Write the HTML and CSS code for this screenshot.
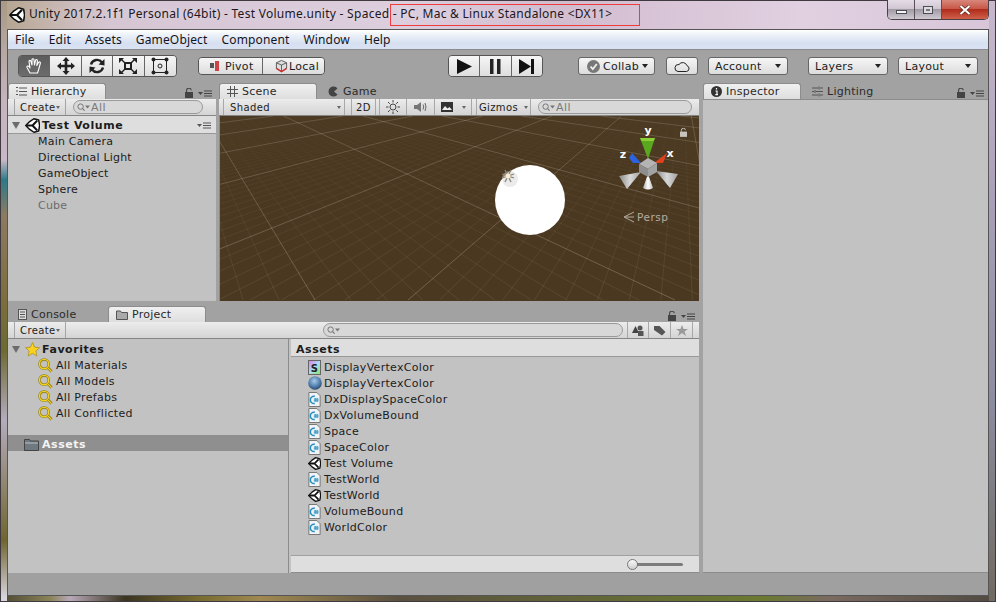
FILE: index.html
```html
<!DOCTYPE html>
<html lang="en">
<head>
    <meta charset="UTF-8">
    <meta name="viewport" content="width=device-width, initial-scale=1.0">
    <title>Unity Editor</title>
    <link rel="stylesheet" href="styles.css">
</head>
<body>

<svg class="defs" width="0" height="0">
    <symbol id="i-unity" viewBox="0 0 16 16">
        <path d="M9.500 .8 14.600 2.200 15.600 8 14.600 13.800 9.500 15.200 5 12.200 .8 8 5 3.800Z" fill="#fff" stroke="#111" stroke-width="1.600" stroke-linejoin="round"/>
        <path d="M1.500 8H8M8 8 13 2.800M8 8 13 13.200" stroke="#111" stroke-width="2.200" fill="none"/>
    </symbol>
    <symbol id="i-cs" viewBox="0 0 13 16">
        <path d="M.5 .5H9L12.500 4V15.500H.5Z" fill="#f0f3f5" stroke="#707070"/>
        <path d="M6.800 4.600A3.900 3.900 0 1 0 6.800 12.200" fill="none" stroke="#1c8ec4" stroke-width="1.600"/>
        <path d="M7.200 6.300V10.700M9.300 6.300V10.700M5.800 7.600H10.800M5.800 9.400H10.800" stroke="#1c8ec4" stroke-width=".9"/>
    </symbol>
    <symbol id="i-glass" viewBox="0 0 16 16">
        <circle cx="6.500" cy="6.500" r="5" fill="none" stroke="#8a7510" stroke-width="2.600"/>
        <circle cx="6.500" cy="6.500" r="5" fill="none" stroke="#f2d21e" stroke-width="1.500"/>
        <path d="M10.500 10.500 14.500 14.500" stroke="#8a7510" stroke-width="3"/>
        <path d="M10.500 10.500 14.500 14.500" stroke="#f2d21e" stroke-width="1.400"/>
    </symbol>
    <symbol id="i-lock" viewBox="0 0 8 10">
        <rect x="0" y="4" width="8" height="6" fill="currentColor"/>
        <path d="M1.600 4V2.600A2.300 2.300 0 0 1 6.200 2.200" fill="none" stroke="currentColor" stroke-width="1.100"/>
    </symbol>
    <symbol id="i-menu" viewBox="0 0 14 7">
        <path d="M0 2H5L2.500 5Z" fill="currentColor"/>
        <path d="M6 1H14M6 3.500H14M6 6H14" stroke="currentColor" stroke-width="1"/>
    </symbol>
    <symbol id="i-glass-small" viewBox="0 0 14 8">
        <circle cx="3.600" cy="3.600" r="2.700" fill="none" stroke="#777"/>
        <path d="M5.600 5.600 7.600 7.600" stroke="#777" stroke-width="1.200"/>
        <path d="M8 2.500H13L10.500 5.500Z" fill="#777"/>
    </symbol>
</svg>

<div class="window">
    <div class="titlebar">
        <svg class="title-logo" width="16" height="16"><use href="#i-unity"/></svg>
        <span class="title-text">Unity 2017.2.1f1 Personal (64bit) - Test Volume.unity - Spaced - PC, Mac &amp; Linux Standalone &lt;DX11&gt;</span>
        <div class="title-mark"></div>
        <div class="winctl">
            <div class="winbtn min"><span></span></div>
            <div class="winbtn max"><span></span></div>
            <div class="winbtn close">
                <svg width="12" height="10" viewBox="0 0 12 10"><path d="M1.500 1 10.500 9M10.500 1 1.500 9" stroke="#5a2a20" stroke-width="3.400"/><path d="M1.500 1 10.500 9M10.500 1 1.500 9" stroke="#fff" stroke-width="2"/></svg>
            </div>
        </div>
    </div>

    <div class="client">
        <div class="menubar">
            <span>File</span><span>Edit</span><span>Assets</span><span>GameObject</span><span>Component</span><span>Window</span><span>Help</span>
        </div>

        <div class="toolbar">
            <div class="btn-group tools">
                <div class="tool on">
                    <svg width="18" height="18" viewBox="0 0 18 18"><path d="M5 16 2 10.500C1.500 9 3 8.500 4 9.500L5 11 4 4.500C4 3 5.800 3 6 4.500L7 8 7 2.800C7 1.300 9 1.300 9 2.800L9.500 8 10.500 3.500C10.800 2 12.600 2.400 12.400 4L11.800 8.500 13.500 5.500C14.300 4.300 15.800 5 15.300 6.500L13.500 13 12.500 16Z" fill="#666" stroke="#fff" stroke-width="1.100" stroke-linejoin="round"/></svg>
                </div>
                <div class="tool">
                    <svg width="18" height="18" viewBox="0 0 18 18"><path d="M9 0 12.500 4H10.300V7.700H14V5.500L18 9 14 12.500V10.300H10.300V14H12.500L9 18 5.500 14H7.700V10.300H4V12.500L0 9 4 5.500V7.700H7.700V4H5.500Z" fill="#222"/></svg>
                </div>
                <div class="tool">
                    <svg width="18" height="18" viewBox="0 0 18 18"><path d="M3 7.500A6.200 6.200 0 0 1 14 5.500M15 10.500A6.200 6.200 0 0 1 4 12.500" fill="none" stroke="#222" stroke-width="2.400"/><path d="M16.500 2 16.500 8.500 10.500 7.500ZM1.500 16 1.500 9.500 7.500 10.500Z" fill="#222"/></svg>
                </div>
                <div class="tool">
                    <svg width="20" height="18" viewBox="0 0 20 18"><rect x="7" y="6" width="6" height="6" fill="none" stroke="#222" stroke-width="2"/><path d="M1 1H6L4.500 2.500 7 5 6 6 3.500 3.500 1 6ZM19 1H14L15.500 2.500 13 5 14 6 16.500 3.500 19 6ZM1 17H6L4.500 15.500 7 13 6 12 3.500 14.500 1 12ZM19 17H14L15.500 15.500 13 13 14 12 16.500 14.500 19 12Z" fill="#222"/></svg>
                </div>
                <div class="tool">
                    <svg width="18" height="18" viewBox="0 0 18 18"><rect x="2.500" y="2.500" width="13" height="13" fill="none" stroke="#222"/><circle cx="2.500" cy="2.500" r="2" fill="#222"/><circle cx="15.500" cy="2.500" r="2" fill="#222"/><circle cx="2.500" cy="15.500" r="2" fill="#222"/><circle cx="15.500" cy="15.500" r="2" fill="#222"/><circle cx="9" cy="9" r="2" fill="none" stroke="#222"/></svg>
                </div>
            </div>

            <div class="btn-group pivot">
                <div class="pill">
                    <svg width="11" height="10" viewBox="0 0 11 10"><rect x="0" y="2" width="4" height="5" fill="#555"/><rect x="5" y="0" width="4" height="10" fill="#c44"/></svg>
                    Pivot
                </div>
                <div class="pill local">
                    <svg width="13" height="14" viewBox="0 0 14 14"><path d="M7 1 12.500 3.500V9.500L7 13 1.500 9.500V3.500Z" fill="#ddd" stroke="#555"/><path d="M1.500 3.500 7 6 12.500 3.500M7 6V13" fill="none" stroke="#555"/><path d="M1.500 9.500 7 13 12.500 9.500" fill="none" stroke="#c33" stroke-width="1.500"/></svg>
                    Local
                </div>
            </div>

            <div class="btn-group play">
                <div class="tool">
                    <svg width="15" height="15" viewBox="0 0 15 15"><path d="M0 0 15 7.500 0 15Z" fill="#111"/></svg>
                </div>
                <div class="tool">
                    <svg width="11" height="15" viewBox="0 0 11 15"><rect width="3.500" height="15" fill="#222"/><rect x="7" width="3.500" height="15" fill="#222"/></svg>
                </div>
                <div class="tool">
                    <svg width="15" height="15" viewBox="0 0 15 15"><path d="M0 0 12 7.500 0 15Z" fill="#111"/><rect x="12" width="3" height="15" fill="#111"/></svg>
                </div>
            </div>

            <div class="drop collab">
                <svg width="13" height="13" viewBox="0 0 13 13"><circle cx="6.500" cy="6.500" r="6.500" fill="#777"/><path d="M3.500 6.500 5.800 9 9.800 4" fill="none" stroke="#eee" stroke-width="1.800"/></svg>
                <span>Collab</span><i class="caret"></i>
            </div>
            <div class="drop cloud">
                <svg width="16" height="11" viewBox="0 0 16 11"><path d="M4 10.500H12.500A3 3 0 0 0 13 4.700 4.500 4.500 0 0 0 5 3.500 3.500 3.500 0 0 0 4 10.500Z" fill="none" stroke="#222"/></svg>
            </div>
            <div class="drop account"><span>Account</span><i class="caret"></i></div>
            <div class="drop layers"><span>Layers</span><i class="caret"></i></div>
            <div class="drop layout"><span>Layout</span><i class="caret"></i></div>
        </div>

        <div class="workspace">
            <div class="left-col">
                <div class="top-row">
                    <section class="panel">
                        <div class="tabs">
                            <div class="tab on">
                                <svg width="11" height="9" viewBox="0 0 11 9"><path d="M3 1H11M3 4.500H11M3 8H11" stroke="#555"/><path d="M0 .5H2M0 4H2M0 7.500H2" stroke="#555"/></svg>
                                Hierarchy
                            </div>
                            <div class="tab-tools">
                                <svg class="lock" width="8" height="10"><use href="#i-lock"/></svg>
                                <svg class="menu" width="14" height="7"><use href="#i-menu"/></svg>
                            </div>
                        </div>
                        <div class="ptools">
                            <div class="create">Create<i class="caret small"></i></div>
                            <div class="search hier-search">
                                <svg width="14" height="8"><use href="#i-glass-small"/></svg>All
                            </div>
                        </div>
                        <div class="pbody">
                            <div class="scene-row">
                                <i class="fold"></i>
                                <svg width="15" height="15"><use href="#i-unity"/></svg>
                                <b>Test Volume</b>
                                <svg class="row-menu" width="14" height="7"><use href="#i-menu"/></svg>
                            </div>
                            <ul class="hier-list">
                                <li>Main Camera</li>
                                <li>Directional Light</li>
                                <li>GameObject</li>
                                <li>Sphere</li>
                                <li class="off">Cube</li>
                            </ul>
                        </div>
                    </section>

                    <section class="panel">
                        <div class="tabs">
                            <div class="tab on">
                                <svg width="11" height="11" viewBox="0 0 11 11"><path d="M3.500 0V11M7.500 0V11M0 3.500H11M0 7.500H11" stroke="#555"/></svg>
                                Scene
                            </div>
                            <div class="tab">
                                <svg width="11" height="11" viewBox="0 0 11 11"><path d="M9.500 2.500A5 5 0 1 0 9.500 8.500L6 5.500Z" fill="#444"/></svg>
                                Game
                            </div>
                        </div>
                        <div class="ptools scene-tools">
                            <div class="seg shaded">Shaded<i class="caret small"></i></div>
                            <div class="seg two-d">2D</div>
                            <div class="seg icon-seg">
                                <svg width="14" height="14" viewBox="0 0 14 14"><circle cx="7" cy="7" r="3" fill="none" stroke="#444"/><path d="M7 0V2.500M7 11.500V14M0 7H2.500M11.500 7H14M2 2 3.800 3.800M10.200 10.200 12 12M12 2 10.200 3.800M3.800 10.200 2 12" stroke="#444"/></svg>
                            </div>
                            <div class="seg icon-seg">
                                <svg width="14" height="12" viewBox="0 0 14 12"><path d="M0 4H3L7 1V11L3 8H0Z" fill="#777"/><path d="M9 3.500Q10.500 6 9 8.500M11 2Q13 6 11 10" fill="none" stroke="#666"/></svg>
                            </div>
                            <div class="seg image-seg">
                                <svg width="12" height="10" viewBox="0 0 12 10"><rect width="12" height="10" fill="#333"/><path d="M1 8 4 4 6.500 6.500 8.500 5 11 8Z" fill="#eee"/></svg>
                                <i class="caret small"></i>
                            </div>
                            <div class="seg gizmos">Gizmos<i class="caret small"></i></div>
                            <div class="search scene-search">
                                <svg width="14" height="8"><use href="#i-glass-small"/></svg>All
                            </div>
                        </div>
                        <div class="scene-view">
                            <svg class="scene-svg" width="479" height="184" viewBox="220 116 479 184">
                                <defs>
                                    <linearGradient id="minor-fade" gradientUnits="userSpaceOnUse" x1="0" y1="116" x2="0" y2="300">
                                        <stop offset="0" stop-color="#fff" stop-opacity=".01"/>
                                        <stop offset="1" stop-color="#fff" stop-opacity=".08"/>
                                    </linearGradient>
                                    <linearGradient id="major-fade" gradientUnits="userSpaceOnUse" x1="0" y1="116" x2="0" y2="300">
                                        <stop offset="0" stop-color="#fff" stop-opacity=".15"/>
                                        <stop offset="1" stop-color="#fff" stop-opacity=".22"/>
                                    </linearGradient>
                                    <linearGradient id="cone-l" x1="0" y1="0" x2="1" y2="0">
                                        <stop offset="0" stop-color="#8a8a8a"/>
                                        <stop offset=".5" stop-color="#d8d8d8"/>
                                        <stop offset="1" stop-color="#a0a0a0"/>
                                    </linearGradient>
                                    <linearGradient id="cone-w" x1="0" y1="0" x2="1" y2="0">
                                        <stop offset="0" stop-color="#aaa"/>
                                        <stop offset=".5" stop-color="#fff"/>
                                        <stop offset="1" stop-color="#bbb"/>
                                    </linearGradient>
                                </defs>
                                <g id="grid" fill="none"></g>
                                <circle cx="530" cy="200" r="35" fill="#fff"/>
                                <g transform="translate(508 176)">
                                    <circle cx="2" cy="3" r="8" fill="#d8d8d8" opacity=".5"/>
                                    <path d="M-6 -2 6 2M-3 -6 3 6M3 -6 -3 6M-6 2 6 -2" stroke="#8c8678" stroke-width="1.300"/>
                                    <circle r="2.500" fill="#fdeccf"/>
                                </g>
                                <path d="M640 138H655L648 159Z" fill="#5aa81e"/>
                                <path d="M640 138H655L653.500 141H641.500Z" fill="#8ad034"/>
                                <path d="M667 153 663 163 654 163Z" fill="#e0401c"/>
                                <path d="M629 158 632 153 641 163 633 163Z" fill="#2a62e0"/>
                                <path d="M619 176 627 189 641 172Z" fill="url(#cone-l)"/>
                                <path d="M678 174 670 188 656 171Z" fill="url(#cone-l)"/>
                                <path d="M643 188Q648 191 653 188L648 174Z" fill="url(#cone-w)"/>
                                <path d="M639 164 648 158 657 163 648 169Z" fill="#b4b4b4"/>
                                <path d="M639 164 648 169V177L639 172Z" fill="#8e8e8e"/>
                                <path d="M657 163 648 169V177L657 172Z" fill="#a2a2a2"/>
                                <text class="axis" x="648" y="134" text-anchor="middle">y</text>
                                <text class="axis" x="670" y="157" text-anchor="middle">x</text>
                                <text class="axis" x="623" y="158" text-anchor="middle">z</text>
                                <path d="M634 212 624 217 634 222M634 217H625" fill="none" stroke="#b5ada0"/>
                                <text class="persp" x="637" y="221">Persp</text>
                                <g transform="translate(680 128)" color="#c8c4bc"><use href="#i-lock" width="7" height="9"/></g>
                            </svg>
                        </div>
                    </section>
                </div>

                <section class="panel bottom-panel">
                    <div class="tabs">
                        <div class="tab console">
                            <svg width="9" height="11" viewBox="0 0 9 11"><rect x=".5" y=".5" width="8" height="10" fill="#ddd" stroke="#555"/><path d="M2 3H7M2 5.500H7M2 8H7" stroke="#555"/></svg>
                            Console
                        </div>
                        <div class="tab on">
                            <svg width="12" height="10" viewBox="0 0 12 10"><path d="M.5 9.500V1H4.500L5.500 2.500H11.500V9.500Z" fill="#aaa" stroke="#555"/></svg>
                            Project
                        </div>
                        <div class="tab-tools">
                            <svg class="lock" width="8" height="10"><use href="#i-lock"/></svg>
                            <svg class="menu" width="14" height="7"><use href="#i-menu"/></svg>
                        </div>
                    </div>
                    <div class="ptools project-tools">
                        <div class="create">Create<i class="caret small"></i></div>
                        <div class="search project-search">
                            <svg width="14" height="8"><use href="#i-glass-small"/></svg>
                        </div>
                        <div class="seg filter">
                            <svg width="12" height="11" viewBox="0 0 12 11"><path d="M0 8 3.500 1 7 8Z" fill="#444"/><circle cx="8" cy="3" r="2.500" fill="#555"/><rect x="6" y="6" width="5.500" height="5" fill="#555"/></svg>
                        </div>
                        <div class="seg filter">
                            <svg width="12" height="11" viewBox="0 0 12 11"><path d="M0 1H5.500L11.500 7 8 10.500 0 5Z" fill="#555"/></svg>
                        </div>
                        <div class="seg filter filter-end">
                            <svg width="12" height="11" viewBox="0 0 12 11"><path d="M6 0 7.500 4H12L8.500 6.500 10 11 6 8 2 11 3.500 6.500 0 4H4.500Z" fill="#999"/></svg>
                        </div>
                    </div>
                    <div class="project-body">
                        <div class="tree">
                            <div class="fav-row">
                                <i class="fold"></i>
                                <svg width="15" height="15" viewBox="0 0 15 15"><path d="M7.500 .5 9.600 5.200 14.500 5.700 10.800 9 11.900 14 7.500 11.400 3.100 14 4.200 9 .5 5.700 5.400 5.200Z" fill="#fad21e" stroke="#a88a18" stroke-width=".7"/></svg>
                                <b>Favorites</b>
                            </div>
                            <ul class="fav-list">
                                <li><svg width="15" height="15"><use href="#i-glass"/></svg>All Materials</li>
                                <li><svg width="15" height="15"><use href="#i-glass"/></svg>All Models</li>
                                <li><svg width="15" height="15"><use href="#i-glass"/></svg>All Prefabs</li>
                                <li><svg width="15" height="15"><use href="#i-glass"/></svg>All Conflicted</li>
                            </ul>
                            <div class="asset-root">
                                <svg width="15" height="13" viewBox="0 0 15 13"><path d="M.5 12.500V1.500H5.500L6.500 3H14.500V12.500Z" fill="#6f7a80" stroke="#444"/><path d="M1 5H14" stroke="#b8c0c4"/></svg>
                                <b>Assets</b>
                            </div>
                        </div>
                        <div class="files">
                            <div class="files-head">Assets</div>
                            <ul class="file-list">
                                <li>
                                    <svg width="13" height="15" viewBox="0 0 13 15">
                                        <defs><linearGradient id="shader-bg" x1="0" y1="0" x2="1" y2="1"><stop offset="0" stop-color="#e878e8"/><stop offset=".5" stop-color="#a8dcf4"/><stop offset="1" stop-color="#8ce858"/></linearGradient></defs>
                                        <rect x=".5" y=".5" width="12" height="14" fill="url(#shader-bg)" stroke="#666"/>
                                        <text class="shader-s" x="6.500" y="11.500" text-anchor="middle">S</text>
                                    </svg>DisplayVertexColor
                                </li>
                                <li>
                                    <svg width="14" height="14" viewBox="0 0 14 14">
                                        <defs><radialGradient id="ball" cx=".45" cy=".35" r=".7"><stop offset="0" stop-color="#a8cae8"/><stop offset=".6" stop-color="#4f7cac"/><stop offset="1" stop-color="#23405f"/></radialGradient></defs>
                                        <circle cx="7" cy="7" r="6.800" fill="url(#ball)"/>
                                    </svg><span class="after-ball">DisplayVertexColor</span>
                                </li>
                                <li><svg width="13" height="15"><use href="#i-cs"/></svg>DxDisplaySpaceColor</li>
                                <li><svg width="13" height="15"><use href="#i-cs"/></svg>DxVolumeBound</li>
                                <li><svg width="13" height="15"><use href="#i-cs"/></svg>Space</li>
                                <li><svg width="13" height="15"><use href="#i-cs"/></svg>SpaceColor</li>
                                <li><svg width="13" height="13"><use href="#i-unity"/></svg>Test Volume</li>
                                <li><svg width="13" height="15"><use href="#i-cs"/></svg>TestWorld</li>
                                <li><svg width="13" height="13"><use href="#i-unity"/></svg>TestWorld</li>
                                <li><svg width="13" height="15"><use href="#i-cs"/></svg>VolumeBound</li>
                                <li><svg width="13" height="15"><use href="#i-cs"/></svg>WorldColor</li>
                            </ul>
                            <div class="files-foot">
                                <div class="slider"><i></i></div>
                            </div>
                        </div>
                    </div>
                </section>
            </div>

            <section class="panel inspector">
                <div class="tabs">
                    <div class="tab on">
                        <svg width="11" height="11" viewBox="0 0 11 11"><circle cx="5.500" cy="5.500" r="5.500" fill="#333"/><path d="M5.500 2V3.500M4.500 5H6V8.500M4.300 8.700H7" stroke="#fff" stroke-width="1.200" fill="none"/></svg>
                        Inspector
                    </div>
                    <div class="tab">
                        <svg width="11" height="11" viewBox="0 0 11 11"><path d="M0 2H6M8 2H11M0 5.500H2M4 5.500H11M0 9H6M8 9H11M7 .5V3.500M3 4V7M7 7.500V10.500" stroke="#555"/></svg>
                        Lighting
                    </div>
                    <div class="tab-tools">
                        <svg class="lock" width="8" height="10"><use href="#i-lock"/></svg>
                        <svg class="menu" width="14" height="7"><use href="#i-menu"/></svg>
                    </div>
                </div>
                <div class="inspector-body"></div>
            </section>
        </div>

        <div class="statusbar"></div>
    </div>
</div>

<script src="grid.js"></script>
</body>
</html>
```

FILE: styles.css
```css
* {
    box-sizing: border-box;
}

body {
    margin: 0;
    font-family: "DejaVu Sans", sans-serif;
    font-size: 11px;
    color: #1c1c1c;
    overflow: hidden;
}

ul {
    list-style: none;
    margin: 0;
    padding: 0;
}

b {
    letter-spacing: .55px;
}

.defs {
    position: absolute;
}

svg {
    flex: none;
}

/* window frame */
.window {
    width: 996px;
    height: 602px;
    padding: 0 7px 6px;
    display: flex;
    flex-direction: column;
    box-shadow: inset 0 0 0 1px #3e3a40;
    background:
        linear-gradient(180deg, #a89a84 0, #c4b4bc 100px, #c8b8c8 160px, #2c7a88 180px, #8c7a62 215px, #7c6e3c 300px, #6c6a32 350px, #b4acbc 420px, #6f6530 540px, #d8d4dc 598px) left / 7px 100% no-repeat,
        linear-gradient(180deg, #c9b8cc 0, #a8a0b8 200px, #8c8ca0 400px, #706a60 600px) right / 7px 100% no-repeat,
        linear-gradient(90deg, #4a4630 0, #8a8258 50px, #b8a8b8 70px, #3a3420 125px, #786c30 200px, #a08850 260px, #5a5040 400px, #6a7a30 760px, #7a6a60 830px, #504a40 996px) bottom / 100% 6px no-repeat,
        linear-gradient(90deg, #b3a48e 0, #c6b6b0 55px, #d6c6d4 110px, #ddcede 400px, #d2bccf 560px, #e0d0e0 800px, #d8c6d8 996px);
}

.titlebar {
    height: 29px;
    flex: none;
    display: flex;
    align-items: flex-start;
    font-family: "Noto Sans", sans-serif;
    font-size: 12px;
    color: #21161c;
}

.title-logo {
    margin: 7px 0 0 2px;
}

.title-text {
    margin: 5px 0 0 4px;
    letter-spacing: .27px;
    white-space: nowrap;
    text-shadow: 0 0 6px rgba(255, 255, 255, .45);
}

/* red box drawn over the title */
.title-mark {
    position: absolute;
    left: 390px;
    top: 4px;
    width: 250px;
    height: 22px;
    border: 1px solid #f03c3c;
}

.winctl {
    margin-left: auto;
    margin-right: 0;
    height: 20px;
    display: flex;
    border: 1px solid #4a4048;
    border-top: 0;
    border-radius: 0 0 5px 5px;
    overflow: hidden;
}

.winbtn {
    display: flex;
    align-items: center;
    justify-content: center;
    width: 27px;
    background: linear-gradient(180deg, #e4dce6 0, #cfc6d2 45%, #a09aa4 50%, #cfcad2 100%);
    border-right: 1px solid #5a5058;
}

.winbtn.min span {
    width: 11px;
    height: 4px;
    margin-top: 5px;
    background: #f4f4f4;
    border: 1px solid #4c4c54;
}

.winbtn.max span {
    width: 10px;
    height: 8px;
    background: #dcdce0;
    border: 1px solid #4c4c54;
    box-shadow: inset 0 0 0 2px #dcdce0, inset 0 0 0 3px #777;
}

.winbtn.close {
    width: 46px;
    border-right: 0;
    background: linear-gradient(180deg, #d8867a 0, #c8594a 45%, #b02c1c 50%, #d0604a 100%);
}

.client {
    flex: 1;
    min-height: 0;
    display: flex;
    flex-direction: column;
    border: 1px solid #555;
    background: #a2a2a2;
}

.menubar {
    height: 20px;
    flex: none;
    display: flex;
    align-items: center;
    gap: 14px;
    padding-left: 7px;
    font-family: "Noto Sans", sans-serif;
    font-size: 12px;
    letter-spacing: .15px;
    color: #14141e;
    background: linear-gradient(180deg, #fff 0, #f0f4fa 20%, #d6e0f0 70%, #d8e2f2 100%);
    border-bottom: 1px solid #8c8c90;
}

/* main toolbar */
.toolbar {
    height: 32px;
    flex: none;
    display: flex;
    align-items: flex-start;
    padding-left: 10px;
    background: #a2a2a2;
}

.btn-group {
    display: flex;
    height: 22px;
    border: 1px solid #555;
    border-radius: 4px;
    overflow: hidden;
    margin-top: 5px;
}

.tool {
    display: flex;
    align-items: center;
    justify-content: center;
    width: 32px;
    background: linear-gradient(180deg, #f6f6f6 0, #dedede 100%);
    border-right: 1px solid #666;
}

.tool:last-child {
    border-right: 0;
}

.tool.on {
    background: linear-gradient(180deg, #5c5c5c 0, #6c6c6c 100%);
}

.tools {
    width: 159px;
}

.pivot {
    height: 18px;
    width: 127px;
    margin: 7px 0 0 21px;
}

.pill {
    width: 64px;
    flex: none;
    display: flex;
    align-items: center;
    gap: 4px;
    padding-left: 11px;
    letter-spacing: .3px;
    background: linear-gradient(180deg, #f6f6f6 0, #dcdcdc 100%);
    border-right: 1px solid #666;
}

.pill.local {
    width: 63px;
    padding-left: 12px;
    gap: 1px;
    border-right: 0;
}

.play {
    width: 95px;
    margin-left: 123px;
}

.play .tool {
    flex: 1;
    width: auto;
}

.drop {
    height: 18px;
    margin-top: 7px;
    padding: 0 6px;
    display: flex;
    align-items: center;
    letter-spacing: .3px;
    background: linear-gradient(180deg, #f6f6f6 0, #dcdcdc 100%);
    border: 1px solid #666;
    border-radius: 3px;
}

.caret {
    width: 0;
    height: 0;
    margin-left: auto;
    border: 3px solid transparent;
    border-top: 4px solid #222;
    border-bottom: 0;
}

.caret.small {
    border-top-color: #666;
    border-width: 3px 2.500px 0;
}

.collab {
    width: 77px;
    margin-left: 35px;
    padding-left: 8px;
    gap: 3px;
}

.cloud {
    width: 32px;
    margin-left: 11px;
    justify-content: center;
    padding: 0;
}

.account {
    width: 80px;
    margin-left: 10px;
}

.layers {
    width: 80px;
    margin-left: 20px;
}

.layout {
    width: 80px;
    margin-left: 10px;
}

/* docked panels */
.workspace {
    flex: 1;
    min-height: 0;
    display: grid;
    grid-template-columns: 691px 285px;
    gap: 4px;
}

.left-col {
    display: grid;
    grid-template-rows: 219px 268px;
    gap: 4px;
    min-height: 0;
}

.top-row {
    display: grid;
    grid-template-columns: 208px 480px;
    gap: 3px;
    min-height: 0;
}

.panel {
    display: flex;
    flex-direction: column;
    min-height: 0;
    min-width: 0;
}

.tabs {
    height: 17px;
    flex: none;
    display: flex;
    align-items: flex-end;
    letter-spacing: .25px;
}

.tab {
    width: 98px;
    height: 16px;
    display: flex;
    align-items: center;
    gap: 4px;
    padding-left: 11px;
    color: #2a2a2a;
}

.tab.on {
    padding-left: 7px;
    background: linear-gradient(180deg, #f0f0f0 0, #dedede 100%);
    border: 1px solid #8c8c8c;
    border-bottom: 0;
    border-radius: 3px 3px 0 0;
}

.tab.console {
    width: 100px;
    padding-left: 10px;
}

.tab-tools {
    margin-left: auto;
    display: flex;
    align-items: center;
    gap: 5px;
    padding: 0 4px 1px 0;
    color: #444;
}

.ptools {
    height: 17px;
    flex: none;
    display: flex;
    align-items: center;
    background: linear-gradient(180deg, #ececec 0, #d4d4d4 100%);
    border-bottom: 1px solid #868686;
    font-size: 10px;
    letter-spacing: .4px;
}

.create {
    width: 52px;
    height: 100%;
    margin-left: 6px;
    padding: 0 5px 0 5px;
    display: flex;
    align-items: center;
    border-left: 1px solid #a4a4a4;
    border-right: 1px solid #a4a4a4;
}

.search {
    height: 14px;
    display: flex;
    align-items: center;
    padding-left: 3px;
    font-size: 11px;
    color: #7a7a7a;
    background: #d8d8d8;
    border: 1px solid #9a9a9a;
    border-radius: 7px;
}

.hier-search {
    width: 130px;
    margin-left: 7px;
}

.pbody {
    flex: 1;
    background: #c2c2c2;
    min-height: 0;
}

.scene-row {
    height: 18px;
    display: flex;
    align-items: center;
    padding: 1px 0 0 4px;
    gap: 2px;
    background: #dedede;
    border-bottom: 1px solid #989898;
}

.scene-row .row-menu {
    margin: 0 5px 0 auto;
    color: #555;
}

.fold {
    width: 0;
    height: 0;
    margin-right: 3px;
    border: 4px solid transparent;
    border-top: 7px solid #6c6c6c;
    border-bottom: 0;
}

.hier-list {
    padding-left: 30px;
    letter-spacing: .2px;
}

.hier-list li {
    height: 16px;
    line-height: 16px;
}

.hier-list .off {
    color: #6c6c6c;
}

/* scene view */
.seg {
    height: 100%;
    display: flex;
    align-items: center;
    border-right: 1px solid #a8a8a8;
}

.scene-tools .seg {
    justify-content: center;
}

.shaded {
    width: 122px;
    margin-left: 4px;
    padding: 0 3px 0 6px;
    border-left: 1px solid #a8a8a8;
}

.scene-tools .shaded {
    justify-content: space-between;
}

.two-d {
    width: 25px;
    margin-left: 6px;
    border-left: 1px solid #a8a8a8;
}

.icon-seg {
    width: 28px;
}

.icon-seg:nth-child(3) {
    margin-left: 3px;
    border-left: 1px solid #a8a8a8;
}

.image-seg {
    width: 37px;
    gap: 9px;
}

.image-seg .caret {
    margin-left: 0;
}

.gizmos {
    width: 55px;
    margin-left: 4px;
    gap: 6px;
    border-left: 1px solid #a8a8a8;
}

.gizmos .caret {
    margin-left: 0;
}

.scene-search {
    width: 154px;
    margin-left: 7px;
}

.scene-view {
    flex: 1;
    min-height: 0;
    background: #4a3820;
    border-left: 1px solid #8a8a8a;
}

.scene-svg {
    display: block;
}

.axis {
    font-family: "DejaVu Sans", sans-serif;
    font-size: 11px;
    font-weight: bold;
    fill: #fff;
}

.persp {
    font-family: "DejaVu Sans", sans-serif;
    font-size: 10.500px;
    letter-spacing: .5px;
    fill: #b5ada0;
}

/* project panel */
.project-search {
    width: 300px;
    margin-left: 257px;
}

.filter {
    width: 22px;
    justify-content: center;
}

.project-tools .filter:nth-child(3) {
    margin-left: 4px;
    border-left: 1px solid #a8a8a8;
}

.project-body {
    flex: 1;
    min-height: 0;
    display: grid;
    grid-template-columns: 281px 1fr;
    background: #c2c2c2;
    letter-spacing: .3px;
}

.tree {
    padding-top: 2px;
    border-right: 1px solid #8c8c8c;
}

.fav-row {
    height: 16px;
    display: flex;
    align-items: center;
    gap: 2px;
    padding-left: 4px;
}

.fav-list li {
    height: 16px;
    display: flex;
    align-items: center;
    gap: 3px;
    padding-left: 30px;
}

.asset-root {
    height: 16px;
    margin-top: 14px;
    padding: 2px 0 0 16px;
    display: flex;
    align-items: center;
    gap: 3px;
    color: #f4f4f4;
    background: #8f8f8f;
}

.files {
    display: flex;
    flex-direction: column;
    min-height: 0;
    margin-left: 2px;
}

.files-head {
    height: 18px;
    flex: none;
    line-height: 22px;
    padding-left: 5px;
    font-weight: bold;
    letter-spacing: .55px;
    background: #dedede;
    border-bottom: 1px solid #989898;
}

.file-list {
    flex: 1;
    padding: 2px 0 0 17px;
}

.file-list li {
    height: 16px;
    display: flex;
    align-items: center;
    gap: 3px;
}

.after-ball {
    margin-left: -1px;
}

.shader-s {
    font-family: "DejaVu Sans", sans-serif;
    font-size: 10px;
    font-weight: bold;
    fill: #222;
}

.files-foot {
    height: 18px;
    flex: none;
    display: flex;
    align-items: center;
    justify-content: flex-end;
    padding-right: 16px;
    background: #dedede;
    border-top: 1px solid #a0a0a0;
    border-bottom: 1px solid #8c8c8c;
}

.slider {
    position: relative;
    width: 51px;
    height: 3px;
    border-radius: 2px;
    background: #7c7c7c;
}

.slider i {
    position: absolute;
    left: -5px;
    top: -4px;
    width: 11px;
    height: 11px;
    border-radius: 50%;
    background: linear-gradient(180deg, #f8f8f8, #cfcfcf);
    border: 1px solid #777;
}

.inspector-body {
    flex: 1;
    background: #c2c2c2;
    border-bottom: 1px solid #8c8c8c;
    border-top: 1px solid #8c8c8c;
}

.statusbar {
    height: 22px;
    flex: none;
    background: #a0a0a0;
}
```

FILE: grid.js
```js
// perspective floor grid for the scene view, in page coordinates
const grid = document.getElementById('grid');
const HORIZON = 64;
const BOTTOM = 300;
const STEP = 31.6;

function addLines(vpX, start, spacing, from, to, stroke, skipMajor) {
    let d = '';
    for (let k = from; k <= to; k++) {
        if (skipMajor && k % 10 === 0) continue;
        const xBottom = start + k * spacing;
        // stop at the top edge of the view, lines meet above it
        const xTop = vpX + (xBottom - vpX) * (116 - HORIZON) / (BOTTOM - HORIZON);
        d += 'M' + xBottom.toFixed(1) + ' ' + BOTTOM + 'L' + xTop.toFixed(1) + ' 116';
    }
    const path = document.createElementNS('http://www.w3.org/2000/svg', 'path');
    path.setAttribute('d', d);
    path.setAttribute('stroke', stroke);
    grid.appendChild(path);
}

addLines(682, 408, STEP, -60, 10, 'url(#minor-fade)', true);
addLines(173, 315, 36, -10, 80, 'url(#minor-fade)', true);
addLines(682, 408, 316, -6, 1, 'url(#major-fade)', false);
addLines(173, 315, 360, -1, 8, 'url(#major-fade)', false);
```
